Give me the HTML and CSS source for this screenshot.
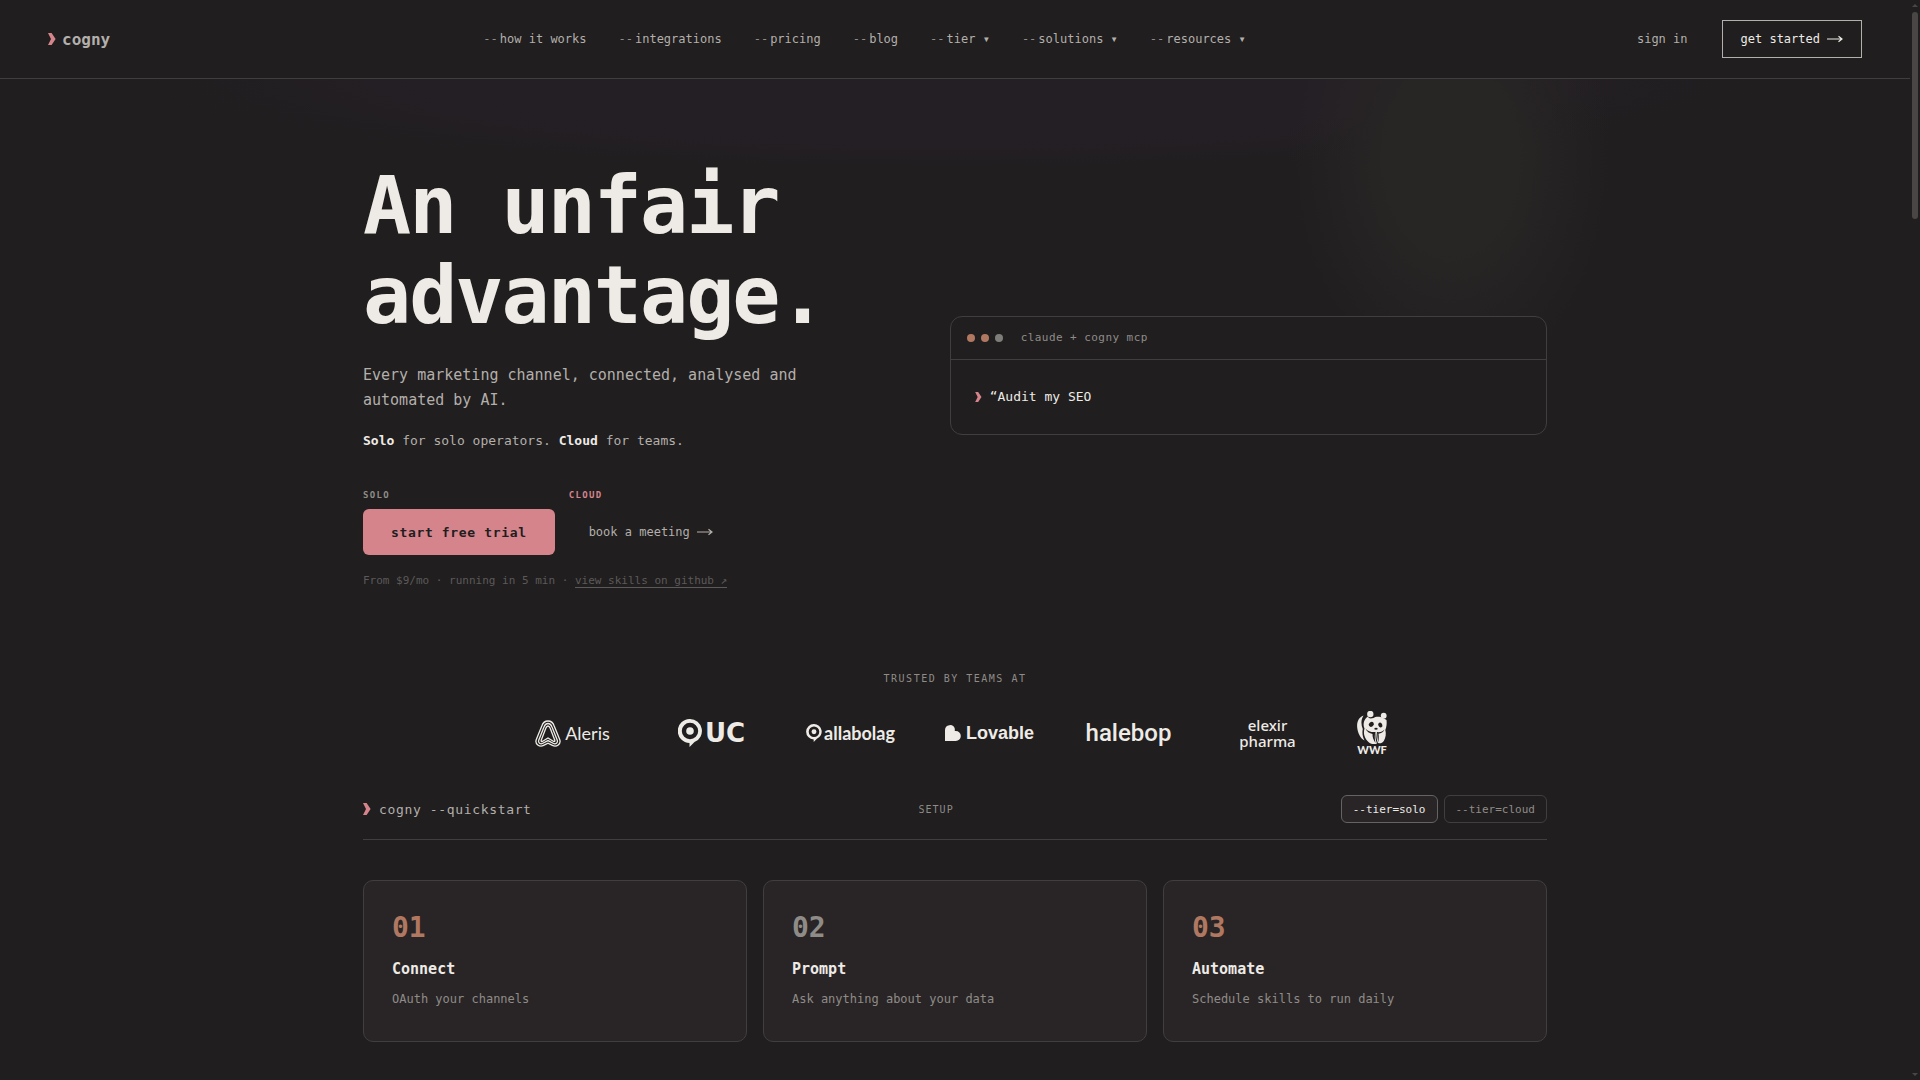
FILE: index.html
```html
<!DOCTYPE html>
<html lang="en">
<head>
<meta charset="utf-8">
<meta name="viewport" content="width=device-width, initial-scale=1">
<title>cogny</title>
<link rel="stylesheet" href="styles.css">
</head>
<body>
<svg class="defs" aria-hidden="true">
  <symbol id="arrow" viewBox="0 0 16 8"><path d="M0 4h14M11.500 1.200L15 4l-3.500 2.800" fill="none" stroke="currentColor" stroke-width="1.200"/></symbol>
  <symbol id="chevron" viewBox="0 0 8 12"><path d="M0 0h3.600L7.600 6 3.600 12H0l3-6z" fill="currentColor"/></symbol>
  <symbol id="pin" viewBox="0 0 24 28"><path fill="currentColor" fill-rule="evenodd" d="M12 0a12 12 0 0 1 4.500 23.100L11.500 28v-4A12 12 0 0 1 12 0zm0 3.800a8.200 8.200 0 1 0 0 16.400 8.200 8.200 0 0 0 0-16.400z"/><circle cx="12" cy="12" r="3.800" fill="currentColor"/></symbol>
</svg>

<header class="topbar">
  <a class="brand" href="#"><svg class="chevron" aria-hidden="true"><use href="#chevron"/></svg>cogny</a>
  <nav class="nav">
    <a href="#"><span class="flag">--</span>how it works</a>
    <a href="#"><span class="flag">--</span>integrations</a>
    <a href="#"><span class="flag">--</span>pricing</a>
    <a href="#"><span class="flag">--</span>blog</a>
    <button type="button"><span class="flag">--</span>tier ▾</button>
    <button type="button"><span class="flag">--</span>solutions ▾</button>
    <button type="button"><span class="flag">--</span>resources ▾</button>
  </nav>
  <div class="account">
    <a class="signin" href="#">sign in</a>
    <a class="started" href="#">get started<svg class="arrow" aria-hidden="true"><use href="#arrow"/></svg></a>
  </div>
</header>

<main class="page">
  <section class="hero">
    <div class="pitch">
      <h1>An unfair<br>advantage.</h1>
      <p class="lead">Every marketing channel, connected, analysed and automated by AI.</p>
      <p class="plans"><strong>Solo</strong> for solo operators. <strong>Cloud</strong> for teams.</p>
      <div class="actions">
        <div class="action">
          <span class="tag">SOLO</span>
          <a class="trial" href="#">start free trial</a>
        </div>
        <div class="action">
          <span class="tag tag-cloud">CLOUD</span>
          <a class="meeting" href="#">book a meeting<svg class="arrow" aria-hidden="true"><use href="#arrow"/></svg></a>
        </div>
      </div>
      <p class="note">From $9/mo · running in 5 min · <a href="#">view skills on github ↗</a></p>
    </div>
    <div class="terminal">
      <div class="terminal-bar">
        <i class="dot"></i><i class="dot"></i><i class="dot dot-idle"></i>
        <span>claude + cogny mcp</span>
      </div>
      <div class="terminal-body"><svg class="chevron" aria-hidden="true"><use href="#chevron"/></svg>“Audit my SEO</div>
    </div>
  </section>

  <section class="trusted">
    <h2>TRUSTED BY TEAMS AT</h2>
    <ul class="logos">
      <li class="aleris">
        <svg viewBox="0 0 26 27" width="26" height="27" fill="none" stroke="currentColor" stroke-width="1.300" aria-hidden="true">
          <path d="M13 1C9.500 1 7.800 3 6.800 6L1.300 19.500C-.4 24 4.500 27.600 8.600 25.400L13 23.200l4.400 2.200c4.100 2.200 9-1.400 7.300-5.900L19.200 6C18.200 3 16.500 1 13 1z"/>
          <path d="M13 3.500c-2.200 0-3.300 1.500-4 3.500L3.700 20.300c-.9 2.600 1.600 4.400 4.200 3L13 20.600l5.100 2.700c2.600 1.400 5.100-.4 4.200-3L17 7c-.7-2-1.800-3.500-4-3.500z"/>
          <path d="M13 6c-1.200 0-1.700 1-2.200 2.300L6.200 20.200c-.4 1.100.5 1.600 1.500 1L13 18l5.300 3.200c1 .6 1.900.1 1.500-1L15.200 8.300C14.700 7 14.200 6 13 6z"/>
        </svg>
        <span>Aleris</span>
      </li>
      <li class="uc">
        <svg class="pin" aria-hidden="true"><use href="#pin"/></svg>
        <span>UC</span>
      </li>
      <li class="allabolag">
        <svg class="pin" aria-hidden="true"><use href="#pin"/></svg>
        <span>allabolag</span>
      </li>
      <li class="lovable">
        <svg viewBox="0 0 16 16" width="16" height="16" aria-hidden="true"><path fill="currentColor" d="M0 16V5a5 5 0 0 1 9.800-1.300V6h1a5 5 0 0 1 0 10z"/></svg>
        <span>Lovable</span>
      </li>
      <li class="halebop"><span>halebop</span></li>
      <li class="elexir"><span>elexir</span><span>pharma</span></li>
      <li class="wwf">
        <svg viewBox="0 0 30 34" width="30" height="34" fill="currentColor" aria-hidden="true">
          <circle cx="13.300" cy="3" r="3.200"/><circle cx="26.700" cy="4.700" r="2.900"/>
          <path d="M6.500 4.500C1.500 6.500-.3 11 .2 16.500.7 22 3.500 27.500 7.500 29.500 5.500 26 5 22 5.800 18 3.800 13.500 4 8.500 6.500 4.500z"/>
          <path d="M11 5.500C7 8 5.600 13 7.500 17.500 6 22.500 7.500 28 12 31.500c2.500 2 6 1.700 8 1C18.500 29 18 25 19 20.500c.5 4 .5 8 1.800 11.300 2 1.200 4.500.2 6-1.800 2-3.500 2.500-7.500 1.500-11C29.500 16 30 12.500 29.500 9L27 7.600C24 5.500 19 5 16.500 7 13.500 8 11.500 7.500 11 5.500z"/>
          <g class="fur">
            <ellipse cx="14.300" cy="13.300" rx="2.700" ry="2.300" transform="rotate(-35 14.300 13.300)"/>
            <ellipse cx="23.300" cy="14" rx="2" ry="2.600" transform="rotate(-25 23.300 14)"/>
            <ellipse cx="19" cy="17.800" rx="1.700" ry="1"/>
            <path d="M8.500 17.500c2.500 3 6.500 4 10 3.500-1 3-1 6 0 11-2-3-3.200-6-3-9-3-.5-6-2.500-7-5.500z"/>
            <path d="M20 21c3 .5 6-.5 7.500-2.500-1 2.500-3.500 4-6 4.200.5 3 .3 6-.2 8.500-.8-3-1-7-1.300-10.200z"/>
          </g>
        </svg>
        <span>WWF</span>
      </li>
    </ul>
  </section>

  <section class="setup">
    <div class="setup-head">
      <h2><svg class="chevron" aria-hidden="true"><use href="#chevron"/></svg>cogny --quickstart</h2>
      <span class="setup-label">SETUP</span>
      <div class="tiers">
        <button class="tier tier-on" type="button">--tier=solo</button>
        <button class="tier" type="button">--tier=cloud</button>
      </div>
    </div>
    <ol class="steps">
      <li class="step"><span class="num">01</span><h3>Connect</h3><p>OAuth your channels</p></li>
      <li class="step"><span class="num num-grey">02</span><h3>Prompt</h3><p>Ask anything about your data</p></li>
      <li class="step"><span class="num">03</span><h3>Automate</h3><p>Schedule skills to run daily</p></li>
    </ol>
  </section>
</main>

<div class="scrollbar" aria-hidden="true"><i class="up"></i><i class="thumb"></i><i class="down"></i></div>
</body>
</html>
```

FILE: styles.css
```css
:root {
  --bg: #201e1f;
  --card: #292526;
  --line: #403e3f;
  --text: #eeebe6;
  --soft: #b3afab;
  --dim: #8f8c88;
  --faint: #5c5a59;
  --pink: #d6848b;
  --copper: #b07860;
}
* { box-sizing: border-box; }
body {
  margin: 0;
  padding-right: 10px;
  min-height: 100vh;
  background: var(--bg);
  color: var(--text);
  font-family: "DejaVu Sans Mono", "Liberation Mono", monospace;
  font-size: 12px;
}
h1, h2, h3, p, ul, ol { margin: 0; padding: 0; list-style: none; }
a { color: inherit; text-decoration: none; }
button { font: inherit; color: inherit; background: none; border: 0; padding: 0; cursor: pointer; }
.defs { display: none; }
.chevron { width: 8px; height: 12px; color: var(--pink); }
.arrow { width: 16px; height: 8px; margin-left: 7px; }

.topbar {
  display: flex;
  justify-content: space-between;
  align-items: center;
  height: 79px;
  padding: 0 48px;
  border-bottom: 1px solid var(--line);
  background: var(--bg);
}
.brand { display: flex; align-items: center; gap: 6px; font-size: 16px; font-weight: bold; color: var(--soft); }
.nav { display: flex; gap: 32px; color: var(--soft); }
.flag { color: var(--dim); margin-right: 2px; }
.account { display: flex; align-items: center; gap: 16px; }
.signin { padding: 0 18px; color: var(--soft); }
.started { display: flex; align-items: center; height: 38px; padding: 0 18px; border: 1px solid var(--soft); }

.page {
  padding: 80px max(48px, calc(50% - 592px)) 38px;
  background:
    radial-gradient(ellipse 160px 230px at 76% 80px, #282525 40%, #231f2400 100%),
    radial-gradient(ellipse 820px 96px at 50% 0, #241f25 60%, #241f2500 100%);
}
.hero { display: grid; grid-template-columns: 7fr 8fr; gap: 64px; align-items: center; }
h1 { padding-top: 2px; font-size: 80px; line-height: 90px; letter-spacing: -2px; white-space: nowrap; }
.lead { max-width: 460px; margin-top: 22px; font-size: 15px; line-height: 25px; color: var(--soft); }
.plans { margin-top: 16px; font-size: 13px; line-height: 24px; color: var(--soft); }
.plans strong { color: var(--text); }
.actions { display: flex; gap: 14px; margin-top: 36px; }
.action { display: flex; flex-direction: column; gap: 8px; }
.tag { font-size: 9px; line-height: 12px; font-weight: bold; letter-spacing: 0.15em; color: var(--dim); }
.tag-cloud { color: var(--pink); }
.trial, .meeting { display: flex; align-items: center; height: 46px; }
.trial {
  padding: 0 28px;
  border-radius: 6px;
  background: var(--pink);
  color: var(--bg);
  font-size: 13px;
  font-weight: bold;
  letter-spacing: 0.05em;
}
.meeting { padding: 0 20px; color: var(--soft); }
.note { margin-top: 16px; font-size: 11px; line-height: 20px; color: var(--faint); white-space: nowrap; }
.note a { border-bottom: 1px solid var(--faint); }

.terminal { border: 1px solid var(--line); border-radius: 12px; background: var(--bg); }
.terminal-bar {
  display: flex;
  align-items: center;
  gap: 6px;
  height: 43px;
  padding: 0 16px;
  border-bottom: 1px solid var(--line);
  font-size: 11px;
  letter-spacing: 0.04em;
  color: var(--dim);
}
.terminal-bar span { margin-left: 12px; }
.dot { width: 8px; height: 8px; border-radius: 50%; background: var(--copper); }
.dot-idle { background: #7f7d79; }
.terminal-body { display: flex; align-items: center; gap: 8px; height: 74px; padding: 0 24px; font-size: 13px; }
.terminal-body .chevron { width: 7px; height: 10px; }

.trusted { margin-top: 78px; }
.trusted h2 { font-size: 10px; line-height: 20px; font-weight: normal; letter-spacing: 0.15em; text-align: center; color: var(--dim); }
.logos { display: flex; justify-content: center; gap: 40px; margin-top: 22px; height: 44px; }
.logos li { display: flex; align-items: center; justify-content: center; width: 99px; }
.aleris { gap: 4px; font: 18px Lato, sans-serif; }
.uc { gap: 3px; font: bold 26px "DejaVu Sans", sans-serif; }
.uc .pin { width: 24px; height: 28px; }
.allabolag { gap: 2px; font: bold 18px Lato, sans-serif; }
.allabolag .pin { width: 16px; height: 18px; }
.lovable { gap: 5px; font: bold 18px "Liberation Sans", sans-serif; }
.halebop { font: 500 24px Roboto, sans-serif; }
.logos .elexir { flex-direction: column; font: 500 15px/16px "Noto Sans", sans-serif; }
.logos .wwf { flex-direction: column; width: 30px; font: 900 11px/10px Lato, sans-serif; }
.fur { fill: var(--bg); }

.setup { margin-top: 40px; }
.setup-head {
  display: flex;
  justify-content: space-between;
  align-items: center;
  padding-bottom: 16px;
  border-bottom: 1px solid var(--line);
}
.setup h2 { display: flex; align-items: center; gap: 8px; font-size: 13px; font-weight: normal; letter-spacing: 0.05em; color: var(--soft); }
.setup-label { font-size: 10px; letter-spacing: 0.1em; color: var(--dim); }
.tiers { display: flex; gap: 6px; }
.tier { height: 28px; padding: 0 11px; border: 1px solid var(--line); border-radius: 6px; font-size: 11px; color: var(--dim); }
.tier-on { border-color: #656364; background: var(--card); color: var(--text); }
.steps { display: grid; grid-template-columns: repeat(3, 1fr); gap: 16px; margin-top: 40px; }
.step { padding: 28px 28px 32px; border: 1px solid var(--line); border-radius: 10px; background: var(--card); }
.num { display: block; font-size: 28px; line-height: 38px; font-weight: bold; color: var(--copper); }
.num-grey { color: var(--dim); }
.step h3 { margin-top: 10px; font-size: 15px; line-height: 24px; }
.step p { margin-top: 8px; line-height: 20px; color: var(--dim); }

.scrollbar {
  position: fixed;
  top: 0;
  right: 0;
  bottom: 0;
  width: 10px;
  padding: 4px 2px;
  display: flex;
  flex-direction: column;
  background: var(--bg);
}
.up, .down { border: 3px solid transparent; }
.up { border-top: 0; border-bottom-color: #4a4646; }
.down { margin-top: auto; border-bottom: 0; border-top-color: #4a4646; }
.thumb { height: 19.2vh; margin-top: 5px; border-radius: 3px; background: #4a4646; }
```
